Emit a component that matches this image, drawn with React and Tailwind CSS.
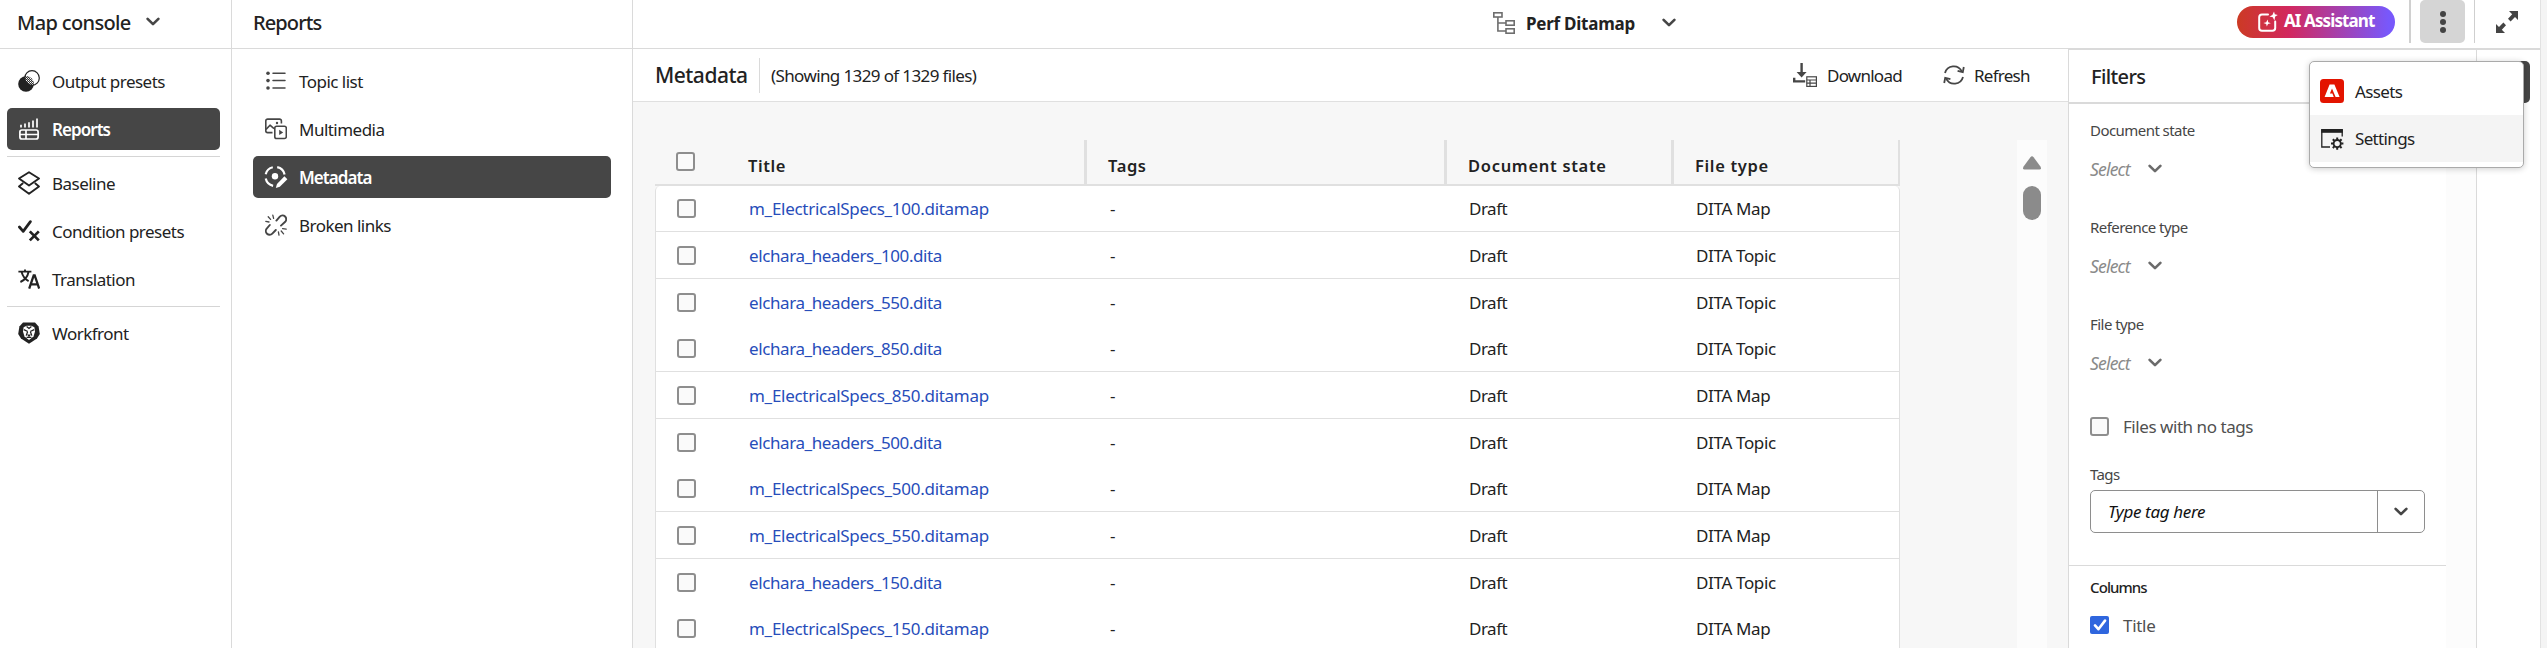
import React from 'react';

function Chevron({ className = 'w-[14px] h-[9px] text-[#464646]' }) {
  return (
    <svg viewBox="0 0 14 9" className={className} fill="none" stroke="currentColor" strokeWidth="2.6" strokeLinecap="round" strokeLinejoin="round">
      <path d="M1.6 1.8 7 7.2l5.4-5.4" />
    </svg>
  );
}

const icons = {
  output: (
    <svg viewBox="0 0 22 22" className="size-[22px]">
      <defs>
        <pattern id="dots" width="2" height="2" patternUnits="userSpaceOnUse">
          <rect width="2" height="2" fill="#333" />
          <rect width="1" height="1" fill="#fff" />
          <rect x="1" y="1" width="1" height="1" fill="#bbb" />
        </pattern>
        <clipPath id="front"><circle cx="14" cy="8" r="7.3" /></clipPath>
      </defs>
      <circle cx="8" cy="14" r="7.8" fill="#222" />
      <g clipPath="url(#front)"><circle cx="8" cy="14" r="7.8" fill="url(#dots)" /></g>
      <circle cx="14" cy="8" r="7.3" fill="none" stroke="#222" strokeWidth="1.2" />
    </svg>
  ),
  reports: (
    <svg viewBox="0 0 22 22" className="size-[22px]" fill="none" stroke="#fff" strokeWidth="1.7">
      <path d="M3 9.4V6.8M7 9.4V5.6M11 9.4V4.2M15 9.4V2.6M19 9.4V.6" />
      <rect x="1.9" y="12" width="18.2" height="9" rx="2" />
      <path d="M2 16.5h18M8 12v9" />
    </svg>
  ),
  baseline: (
    <svg viewBox="0 0 22 24" className="h-[24px] w-[22px]" fill="none" stroke="#222" strokeWidth="1.9" strokeLinejoin="round">
      <path d="M11 1.2 21 7.500 11 14.500 1 7.500Z" />
      <path d="m5.200 12-4.200 3.500 10 7.200 10-7.200-4.200-3.500" />
    </svg>
  ),
  condition: (
    <svg viewBox="0 0 22 22" className="size-[22px]" fill="none" stroke="#222" strokeWidth="2.7">
      <path d="M1.400 7 5.200 11.400 12.400 1.600" strokeLinecap="round" strokeLinejoin="round" />
      <path d="m11.800 11.400 9 9M20.800 11.400l-9 9" />
    </svg>
  ),
  translation: (
    <svg viewBox="0 0 22 22" className="size-[22px]" fill="none" stroke="#222" strokeWidth="1.9">
      <path d="M.4 3.600h13M7 1.600v2M10.600 3.800C9.600 9 6.200 12.400 2.400 14M3.600 4c1.200 4.400 3.600 7.400 7 9.200" />
      <path d="m11.200 20.600 4.500-13.200h1l4.500 13.200M12.800 16.400h7" strokeWidth="2.3" />
    </svg>
  ),
  workfront: (
    <svg viewBox="0 0 22 22" className="size-[22px]">
      <path d="M5 .4h12l3.600 4L21.800 12 19 16.600 11 21.800 3 16.600.2 12 1.400 4.400Z" fill="#222" />
      <path d="M5.600 5.200 8.600 3.800h4.800l3 1.400.6 4.200-1.500 5.200L11 18l-4.500-3.400L5 9.400Z" fill="#fff" />
      <path d="M5.800 7.600 9.800 9.500M16.200 7.600l-4 1.900M8.600 4.600l2.400 1.800 2.400-1.800M9.600 9.800 8.200 13.600M12.400 9.800l1.400 3.800M8.600 15.400h4.800" stroke="#222" strokeWidth="1.300" fill="none" />
      <path d="M9 12.600h4L11 15.200Z" fill="#222" />
    </svg>
  ),
  list: (
    <svg viewBox="0 0 22 22" className="size-[22px]" fill="none" stroke="#464646" strokeWidth="1.500" strokeLinecap="round">
      <path d="M8 3.300h12M8 10.600h12M8 18h12" />
      <g fill="#464646" stroke="none"><circle cx="3" cy="3.300" r="1.800" /><circle cx="3" cy="10.600" r="1.800" /><circle cx="3" cy="18" r="1.800" /></g>
    </svg>
  ),
  multimedia: (
    <svg viewBox="0 0 22 22" className="size-[22px]" fill="none" stroke="#464646" strokeWidth="1.600" strokeLinejoin="round">
      <path d="M7.500 14.600H2.600a1.800 1.800 0 0 1-1.800-1.800V2.900A1.800 1.800 0 0 1 2.600 1.100h12a1.800 1.800 0 0 1 1.800 1.800v2.600" />
      <path d="m1 11.400 4-4.200 4 3.400" />
      <circle cx="12" cy="5" r="1.200" fill="#464646" stroke="none" />
      <rect x="9.800" y="8.300" width="11.500" height="12.200" rx="1.800" />
      <path d="M14.200 11.800v5.200l4-2.600Z" fill="#464646" stroke="none" />
    </svg>
  ),
  metadata: (
    <svg viewBox="0 0 24 24" className="-ml-px size-[24px] shrink-0" fill="none" stroke="#fff" strokeWidth="2.200">
      <path d="M8.800 2.300A9.600 9.600 0 0 0 1.700 9.200M13.200 2.200a9.600 9.600 0 0 1 7.400 7.400M1.700 13.600a9.600 9.600 0 0 0 7.400 7.200" />
      <circle cx="11" cy="11.200" r="3.200" fill="#fff" stroke="none" />
      <path d="m20.400 11.200 3 3-7.600 7.600-4 1.200 1.200-4Z" fill="#fff" stroke="none" />
    </svg>
  ),
  broken: (
    <svg viewBox="0 0 22 22" className="size-[22px]" fill="none" stroke="#464646" strokeWidth="1.900" strokeLinecap="round">
      <path d="M11.400 6.600 14.800 2.600a3.700 3.700 0 0 1 5.400 5.200L16 11.600M4.800 11 1.900 14.400a3.700 3.700 0 0 0 5.400 5.200L10.800 16" />
      <path d="M7.800 1.200l.8 3.200M3.200 2.800l2.400 2.600M.8 7.400l3.200.6M17.600 14.600l3.600.6M16.200 17l2.400 2.800M13.400 17.800l.6 3.400" strokeWidth="1.300" />
    </svg>
  ),
};

function NavItem({ icon, label, active, indent }) {
  return (
    <div className={`flex h-[42px] items-center rounded-[5px] ${indent ? 'pl-[12px]' : 'pl-[11px]'} ${active ? 'bg-[#464646] text-white' : 'text-[#222]'}`}>
      <span className="flex w-[22px] shrink-0 items-center justify-center">{icons[icon]}</span>
      <span className={`ml-[12px] whitespace-nowrap pt-px ${active ? 'font-semibold tracking-[-0.95px]' : 'tracking-[-0.52px]'}`}>{label}</span>
    </div>
  );
}

function Box({ checked }) {
  return checked ? (
    <span className="flex h-[18px] w-[19px] shrink-0 items-center justify-center rounded-[2px] bg-[#2f66de]">
      <svg viewBox="0 0 14 12" className="h-[12px] w-[14px]" fill="none" stroke="#fff" strokeWidth="2.600" strokeLinecap="round" strokeLinejoin="round"><path d="m2 6.400 3.400 3.800L12 1.600" /></svg>
    </span>
  ) : (
    <span className="h-[19px] w-[19px] shrink-0 rounded-[3px] border-2 border-[#8e8e8e] bg-[#fafafa]" />
  );
}

const rows = [
  ['m_ElectricalSpecs_100.ditamap', 'DITA Map', 'h-[46px] pt-[13px] border-b'],
  ['elchara_headers_100.dita', 'DITA Topic', 'h-[47px] pt-[14px] border-b'],
  ['elchara_headers_550.dita', 'DITA Topic', 'h-[46px] pt-[14px]'],
  ['elchara_headers_850.dita', 'DITA Topic', 'h-[47px] pt-[14px] border-b'],
  ['m_ElectricalSpecs_850.ditamap', 'DITA Map', 'h-[47px] pt-[14px] border-b'],
  ['elchara_headers_500.dita', 'DITA Topic', 'h-[46px] pt-[14px]'],
  ['m_ElectricalSpecs_500.ditamap', 'DITA Map', 'h-[47px] pt-[14px] border-b'],
  ['m_ElectricalSpecs_550.ditamap', 'DITA Map', 'h-[47px] pt-[14px] border-b'],
  ['elchara_headers_150.dita', 'DITA Topic', 'h-[46px] pt-[14px]'],
  ['m_ElectricalSpecs_150.ditamap', 'DITA Map', 'h-[47px] pt-[14px]'],
];

function Row({ title, type, className }) {
  const isMap = title.startsWith('m_');
  return (
    <div className={`flex shrink-0 items-start border-[#e0e0e0] pl-[21px] leading-[20px] text-[#222] ${className}`}>
      <Box />
      <span className={`ml-[53px] w-[361px] text-[#274dba] ${isMap ? 'tracking-[-0.28px]' : 'tracking-[-0.4px]'}`}>{title}</span>
      <span className="w-[359px]">-</span>
      <span className="w-[227px] tracking-[-0.5px]">Draft</span>
      <span className="tracking-[-0.35px]">{type}</span>
    </div>
  );
}

function HeadCell({ label, className }) {
  return (
    <div className={`flex items-end border-[#e0e0e0] pb-[5px] text-[16.500px] font-semibold text-[#222] ${className}`}>{label}</div>
  );
}

function Filter({ label }) {
  return (
    <div className="flex h-[97px] flex-col">
      <span className="text-[15px] leading-[20px] tracking-[-0.55px] text-[#464646]">{label}</span>
      <span className="mt-[18px] flex items-center gap-[14px] leading-[22px]">
        <span className="w-[44px] text-[17.500px] italic tracking-[-0.8px] text-[#8a8a8a]">Select</span>
        <Chevron className="mt-[-2px] h-[9px] w-[14px] text-[#6b6b6b]" />
      </span>
    </div>
  );
}

export default function App() {
  return (
    <div className="relative flex h-[648px] w-[2547px] overflow-hidden bg-white text-[17px] text-[#222] [font-family:'Noto_Sans',sans-serif]">
      <aside className="flex w-[232px] shrink-0 flex-col border-r border-[#dadada]">
        <div className="flex h-[49px] items-center border-b border-[#dadada] pb-[2px] pl-[17px]">
          <span className="w-[129px] whitespace-nowrap text-[20px] font-medium tracking-[-0.65px]">Map console</span>
          <Chevron className="mt-[-3px] h-[9px] w-[14px] text-[#464646]" />
        </div>
        <nav className="flex flex-col pl-[7px] pr-[11px] pt-[11px]">
          <div className="flex flex-col gap-[6px]">
            <NavItem icon="output" label="Output presets" />
            <NavItem icon="reports" label="Reports" active />
          </div>
          <div className="mb-[5px] mt-[6px] h-px bg-[#d5d5d5]" />
          <div className="flex flex-col gap-[6px]">
            <NavItem icon="baseline" label="Baseline" />
            <NavItem icon="condition" label="Condition presets" />
            <NavItem icon="translation" label="Translation" />
          </div>
          <div className="mb-[5px] mt-[6px] h-px bg-[#d5d5d5]" />
          <NavItem icon="workfront" label="Workfront" />
        </nav>
      </aside>

      <aside className="flex w-[401px] shrink-0 flex-col border-r border-[#dadada]">
        <div className="flex h-[49px] items-center border-b border-[#dadada] pb-[2px] pl-[21px]">
          <span className="text-[20px] font-medium tracking-[-0.9px]">Reports</span>
        </div>
        <nav className="flex flex-col gap-[6px] px-[21px] pt-[11px]">
          <NavItem icon="list" label="Topic list" indent />
          <NavItem icon="multimedia" label="Multimedia" indent />
          <NavItem icon="metadata" label="Metadata" active indent />
          <NavItem icon="broken" label="Broken links" indent />
        </nav>
      </aside>

      <div className="flex w-[1907px] shrink-0 flex-col">
        <header className="flex h-[49px] shrink-0 items-start border-b border-[#dadada]">
          <div className="flex h-[45px] w-[1604px] items-center pl-[860px]">
            <svg viewBox="0 0 22 22" className="size-[22px]" fill="none" stroke="#6e6e6e" strokeWidth="1.600">
              <rect x=".8" y=".8" width="8.200" height="4.200" />
              <rect x="13" y="8.800" width="8.200" height="4.400" />
              <rect x="13" y="16.800" width="8.200" height="4.400" />
              <path d="M4.900 5v14H13M4.900 11H13" />
            </svg>
            <span className="ml-[11px] w-[136px] whitespace-nowrap pt-[2px] font-bold tracking-[-0.25px]">Perf Ditamap</span>
            <Chevron />
          </div>
          <div className="mt-[6px] flex h-[32px] w-[158px] items-center rounded-full bg-[linear-gradient(90deg,#cc3a24_0%,#d2285f_33%,#7858fb_96%)] pl-[21px] text-white">
            <svg viewBox="0 0 20 20" className="-mt-px size-[20px] overflow-visible" fill="none" stroke="#fff" strokeWidth="2">
              <path d="M10 2.400H4A2.800 2.800 0 0 0 1.200 5.200V16A2.800 2.800 0 0 0 4 18.800h10.400a2.800 2.800 0 0 0 2.800-2.800V9.400" strokeLinecap="round" />
              <path d="m16-.4.8 2.600 3 .8-2.600 1.400-.8 4-1.600-3.200-3.400-.8 3-1.400Z" fill="#fff" stroke="none" />
              <path d="m9.600 7.600.6 2.600 2.600 1-2.800.8-1.200 2.600-.6-2.600-2.800-1 2.800-.8Z" fill="#fff" stroke="none" />
            </svg>
            <span className="ml-[6px] mt-[-2px] whitespace-nowrap font-bold tracking-[-0.9px]">AI Assistant</span>
          </div>
          <div className="ml-[14px] h-[43px] w-[2px] bg-[#d0d0d0]" />
          <div className="ml-[9px] flex h-[43px] w-[45px] flex-col items-center justify-center gap-[2px] rounded-[5px] bg-[#d5d5d5]">
            <span className="size-[6px] rounded-full bg-[#444]" />
            <span className="size-[6px] rounded-full bg-[#444]" />
            <span className="size-[6px] rounded-full bg-[#444]" />
          </div>
          <div className="ml-[9px] h-[43px] w-px bg-[#cfcfcf]" />
          <svg viewBox="0 0 22 22" className="ml-[21px] mt-[11px] size-[22px]" fill="#444">
            <path d="M13 0h9v9l-3-3-4.400 4.400-2.600-2.600L16.200 3.200ZM9 22H0v-9l3 3 4.400-4.400 2.600 2.600L5.800 18.800Z" />
          </svg>
        </header>

        <div className="flex min-h-0 flex-1">
          <main className="flex w-[1435px] shrink-0 flex-col bg-[#f7f7f7]">
            <div className="flex h-[53px] shrink-0 items-center border-b border-[#e0e0e0] bg-white pl-[22px]">
              <span className="w-[104px] whitespace-nowrap pt-[1px] text-[21px] font-medium tracking-[-0.5px]">Metadata</span>
              <span className="h-[35px] w-px bg-[#dadada]" />
              <span className="ml-[11px] w-[1022px] whitespace-nowrap pt-[1px] tracking-[-0.62px]">(Showing 1329 of 1329 files)</span>
              <svg viewBox="0 0 24 24" className="mt-[-1px] size-[24px]" fill="none" stroke="#464646" strokeWidth="2.400">
                <path d="M8.600 0v10" />
                <path d="M3.600 9h10L8.600 14.400Z" fill="#464646" stroke="none" />
                <path d="M1.200 14.800v3.600h11" />
                <rect x="13.800" y="13.800" width="9.600" height="9.600" strokeWidth="1.200" />
                <path d="M13.800 17h9.600M13.800 20.200h9.600M17 17v6.400" strokeWidth="1.200" />
              </svg>
              <span className="ml-[10px] w-[116px] pt-[1px] tracking-[-0.75px]">Download</span>
              <svg viewBox="0 0 22 22" className="mt-[-1px] size-[22px]" fill="none" stroke="#464646" strokeWidth="1.800">
                <path d="M2 9A9 9 0 0 1 18.800 7.400M20 13A9 9 0 0 1 3.200 14.600" />
                <path d="m20.800 3-1 5.200-5.200-1.400M1.200 19l1-5.200 5.200 1.400" />
              </svg>
              <span className="ml-[9px] pt-[1px] tracking-[-0.75px]">Refresh</span>
            </div>
            <div className="flex min-h-0 flex-1 pl-[22px] pt-[38px]">
              <div className="flex w-[1245px] flex-col">
                <div className="flex h-[46px] shrink-0 border-b-2 border-[#e0e0e0]">
                  <div className="flex w-[93px] pl-[21px] pt-[12px]"><Box /></div>
                  <HeadCell label="Title" className="w-[339px] border-r-[3px] tracking-[0.6px]" />
                  <HeadCell label="Tags" className="w-[360px] border-r-[3px] pl-[21px] tracking-[0.6px]" />
                  <HeadCell label="Document state" className="w-[227px] border-r-[3px] pl-[21px] tracking-[0.7px]" />
                  <HeadCell label="File type" className="w-[226px] border-r-2 pl-[21px] tracking-[0.65px]" />
                </div>
                <div className="flex min-h-0 flex-1 flex-col overflow-hidden rounded-t-[5px] border-x border-[#e0e0e0] bg-white">
                  {rows.map(([title, type, cls]) => <Row key={title} title={title} type={type} className={cls} />)}
                </div>
              </div>
              <div className="ml-[117px] flex w-[30px] flex-col items-center bg-[#fcfcfc] pt-[16px]">
                <svg viewBox="0 0 18 14" className="h-[14px] w-[18px]" fill="#8b8b8b"><path d="M7.400 1.200q1.600-2 3.200 0L17.600 10.800q1 2.700-1.200 2.700H1.600Q-.6 13.500.4 10.800Z" /></svg>
                <span className="mt-[16px] h-[34px] w-[18px] rounded-full bg-[#8b8b8b]" />
              </div>
            </div>
          </main>

          <section className="flex w-[409px] shrink-0 flex-col border-x border-t border-[#dadada]">
            <div className="flex h-[54px] shrink-0 items-center border-b-2 border-[#dadada] pl-[22px] pt-[2px] text-[20px] font-medium tracking-[-0.6px]">Filters</div>
            <div className="flex min-h-0 flex-1">
              <div className="flex w-[377px] flex-col">
                <div className="flex flex-col pl-[21px] pt-[16px]">
                  <Filter label="Document state" />
                  <Filter label="Reference type" />
                  <Filter label="File type" />
                  <div className="mt-[6px] flex h-[19px] items-center gap-[14px]">
                    <Box />
                    <span className="tracking-[-0.45px] text-[#505050]">Files with no tags</span>
                  </div>
                  <span className="mt-[28px] text-[15px] leading-[20px] tracking-[-0.6px] text-[#464646]">Tags</span>
                  <div className="mt-[6px] flex h-[43px] w-[335px] items-center rounded-[5px] border border-[#8e8e8e]">
                    <span className="flex h-full w-[287px] items-center border-r border-[#8e8e8e] pl-[17px] italic tracking-[-0.35px] text-[#111]">Type tag here</span>
                    <Chevron className="ml-[16px] h-[9px] w-[14px] text-[#464646]" />
                  </div>
                </div>
                <div className="mt-[32px] flex flex-col border-t border-[#dadada] pl-[21px] pt-[11px]">
                  <span className="text-[15px] font-medium leading-[20px] tracking-[-0.9px]">Columns</span>
                  <div className="mt-[19px] flex h-[18px] items-center gap-[14px]">
                    <Box checked />
                    <span className="pt-[2px] tracking-[-0.3px] text-[#505050]">Title</span>
                  </div>
                </div>
              </div>
              <div className="flex-1 bg-[#fcfcfc]" />
            </div>
          </section>

          <div className="flex w-[63px] justify-center border-t border-[#dadada] pt-[11px]">
            <span className="mr-[-1px] h-[42px] w-[42px] rounded-[5px] bg-[#464646]" />
          </div>
        </div>
      </div>

      <div className="flex-1 border-l border-[#e2e2e2] bg-[#f4f4f4]" />

      <div className="absolute left-[2309px] top-[61px] flex h-[107px] w-[215px] flex-col rounded-[5px] border border-[#aaa] bg-white shadow-[0_1px_6px_rgba(0,0,0,0.2)]">
        <div className="flex h-[53px] items-center gap-[11px] pl-[10px] pt-[5px]">
          <svg viewBox="0 0 24 24" className="size-[24px]"><rect width="24" height="24" rx="3.500" fill="#e31400" /><path d="M9.600 5.400h4.800L19.600 18h-4L12 9.400 9.900 14.600h2.500L13.800 18H4.600Z" fill="#fff" /></svg>
          <span className="pt-[1px] tracking-[-0.6px]">Assets</span>
        </div>
        <div className="flex h-[47px] items-center gap-[12px] bg-[#f4f4f4] pl-[11px]">
          <svg viewBox="0 0 22 22" className="size-[22px] overflow-visible" fill="none" stroke="#222" strokeWidth="1.300">
            <path d="M9 19H.8V2h20.400v6.500" />
            <path d="M.2 1h21.600v3.800H.2Z" fill="#222" stroke="none" />
            <circle cx="16.200" cy="15.600" r="3.600" strokeWidth="1.900" />
            <path d="M16.200 9.400v2.200M16.200 19.600v2.200M10 15.600h2.200M20.200 15.600h2.200M11.800 11.200l1.600 1.600M19 18.400l1.600 1.600M20.600 11.200 19 12.800M13.400 18.400 11.800 20" strokeWidth="2" />
          </svg>
          <span className="tracking-[-0.65px]">Settings</span>
        </div>
      </div>
    </div>
  );
}
